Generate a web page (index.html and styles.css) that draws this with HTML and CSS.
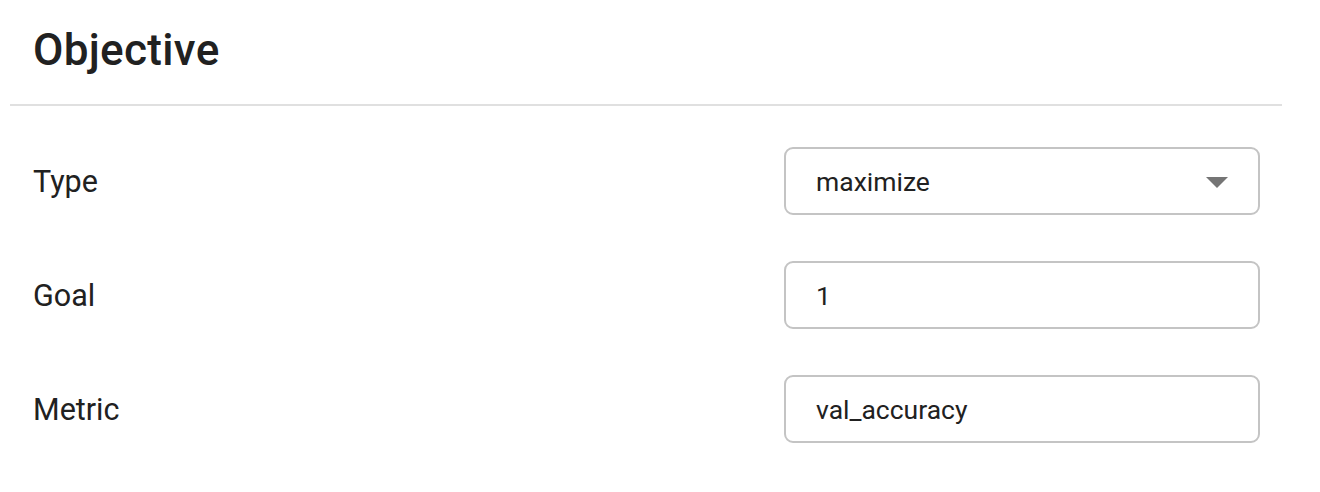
FILE: index.html
```html
<!DOCTYPE html>
<html>
<head>
<meta charset="utf-8">
<link rel="stylesheet" href="styles.css">
</head>
<body>
<div class="panel">
  <div class="header">
    <h2 class="title">Objective</h2>
  </div>
  <div class="rows">
    <div class="row">
      <div class="label">Type</div>
      <div class="field select">
        <span class="value">maximize</span>
        <svg class="arrow" width="22" height="11" viewBox="0 0 22 11"><path d="M0 0 L22 0 L11 11 Z" fill="#757575"/></svg>
      </div>
    </div>
    <div class="row">
      <div class="label">Goal</div>
      <div class="field"><span class="value">1</span></div>
    </div>
    <div class="row">
      <div class="label">Metric</div>
      <div class="field"><span class="value">val_accuracy</span></div>
    </div>
  </div>
</div>
</body>
</html>
```
FILE: styles.css
```css
html, body {
  margin: 0;
  padding: 0;
  background: #fff;
}
body {
  font-family: Roboto, "Noto Sans", Arial, sans-serif;
  color: #212121;
}
.panel {
  width: 1272px;
  margin-left: 10px;
}
.header {
  height: 106px;
  border-bottom: 2px solid #e0e0e0;
  display: flex;
  align-items: center;
  padding-left: 23px;
  box-sizing: border-box;
}
.title {
  margin: 0;
  font-family: "Roboto Medium", Roboto, sans-serif;
  font-size: 44px;
  font-weight: 500;
  letter-spacing: 0.3px;
  line-height: 1;
  position: relative;
  top: -2px;
}
.rows {
  padding-top: 41px;
  display: flex;
  flex-direction: column;
  gap: 46px;
}
.row {
  display: flex;
  align-items: center;
  justify-content: space-between;
  padding-left: 23px;
  padding-right: 22px;
}
.label {
  font-size: 30.5px;
  color: #212121;
}
.field {
  width: 476px;
  height: 68px;
  box-sizing: border-box;
  border: 2px solid #c4c4c4;
  border-radius: 9px;
  display: flex;
  align-items: center;
  padding-left: 30px;
  padding-right: 30px;
}
.value {
  font-size: 26.5px;
  color: #212121;
  flex: 1;
}
.arrow {
  display: block;
  margin-top: 2px;
}
```
